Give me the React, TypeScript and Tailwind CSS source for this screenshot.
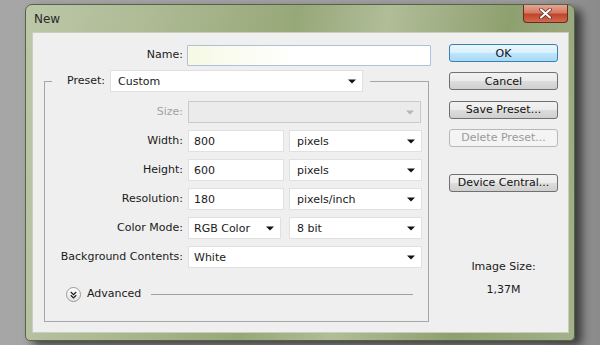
import React from 'react'

const font = { fontFamily: '"DejaVu Sans", Verdana, sans-serif' }

function Arrow({ disabled = false }: { disabled?: boolean }) {
  return (
    <svg width="8" height="5" viewBox="0 0 8 5" aria-hidden="true">
      <path d="M0 0.5h8L4 4.5z" fill={disabled ? '#b5b5b5' : '#111'} />
    </svg>
  )
}

function Select({ value, w, disabled = false, pl = 'pl-[7px]' }: { value: string; w: string; disabled?: boolean; pl?: string }) {
  return (
    <div
      className={`${w} h-[22px] flex items-center justify-between ${pl} pr-[6px] border ${
        disabled ? 'bg-[#ebebeb] border-[#c9c9c9]' : 'bg-white border-[#e0e0e0]'
      }`}
    >
      <span className="text-[11px] text-[#1a1a1a] leading-none">{value}</span>
      <Arrow disabled={disabled} />
    </div>
  )
}

function Field({ value, w }: { value: string; w: string }) {
  return (
    <div className={`${w} h-[22px] flex items-center pl-[5px] bg-white border border-[#e0e0e0]`}>
      <span className="text-[11px] text-[#1a1a1a] leading-none">{value}</span>
    </div>
  )
}

function Btn({ label, kind = 'normal' }: { label: string; kind?: 'normal' | 'default' | 'disabled' }) {
  const look =
    kind === 'default'
      ? 'border-[#3c7fb1] bg-[linear-gradient(#eaf6fd,#d9f0fc_50%,#bee6fd_50%,#a7d9f5)] text-[#111]'
      : kind === 'disabled'
        ? 'border-[#b5b9bc] bg-[#f4f4f4] text-[#9a9a9a]'
        : 'border-[#707070] bg-[linear-gradient(#f2f2f2,#ebebeb_50%,#dddddd_50%,#cfcfcf)] text-[#111]'
  return (
    <div className={`w-[109px] h-[18px] rounded-[3px] border flex items-center justify-center text-[11px] leading-none ${look}`}>
      {label}
    </div>
  )
}

function Row({ label, children, muted = false }: { label: string; children: React.ReactNode; muted?: boolean }) {
  return (
    <>
      <div className={`h-[22px] flex items-center justify-end text-[11px] ${muted ? 'text-[#a3a3a3]' : 'text-[#1a1a1a]'}`}>
        {label}
      </div>
      <div className="h-[22px] flex items-center gap-[5px]">{children}</div>
    </>
  )
}

export default function App() {
  return (
    <div
      className="w-[600px] h-[345px] overflow-hidden pl-[25px] pt-[4px] bg-[linear-gradient(90deg,#a6a6a6,#9c9c9c_90%,#8a8a8a)]"
      style={font}
    >
      <div className="w-[550px] h-[337px] flex flex-col rounded-t-[7px] rounded-b-[5px] border border-[#56634a] bg-[linear-gradient(100deg,#bcc7a8,#aebb95_20%,#97a878_45%,#b0bd98_60%,#8fa06f_80%,#a3b28a)] shadow-[7px_5px_10px_rgba(0,0,0,0.6)]">
        {/* Title bar */}
        <div className="h-[27px] shrink-0 flex items-start justify-between">
          <span className="pl-[8px] pt-[8px] text-[12px] leading-none text-[#2a2a2a]">New</span>
          <div className="mr-[6px] w-[45px] h-[18px] rounded-b-[4px] border border-t-0 border-[#6a2a1e] bg-[linear-gradient(#e6a593,#d57a62_45%,#c0452c_55%,#d06a50)] flex items-center justify-center">
            <svg width="13" height="11" viewBox="0 0 13 11" aria-hidden="true">
              <path d="M2 1.5l9 8M11 1.5l-9 8" stroke="#5a2418" strokeWidth="3.6" strokeLinecap="round" />
              <path d="M2 1.5l9 8M11 1.5l-9 8" stroke="#fff" strokeWidth="2.2" strokeLinecap="round" />
            </svg>
          </div>
        </div>

        {/* Panel */}
        <div className="ml-[6px] w-[537px] h-[301px] flex bg-[#efefef] border border-[#c8cfbd]">
          {/* Left */}
          <div className="pl-[11px] pt-[12px] w-[404px]">
            <div className="flex items-center pl-[1px] gap-[4px]">
              <div className="w-[138px] text-right text-[11px] text-[#1a1a1a]">Name:</div>
              <div className="w-[244px] h-[21px] border border-[#a9c3dc] rounded-[1px] bg-[linear-gradient(90deg,#f6f9e4,#ffffff_45%)]" />
            </div>

            <div className="mt-[15px] w-[385px] border border-[#a6a6a6] pb-[18px]">
              {/* legend */}
              <div className="-mt-[12px] ml-[7px] w-[318px] flex items-center bg-[#efefef] pl-[15px]">
                <span className="text-[11px] text-[#1a1a1a]">Preset:</span>
                <div className="ml-[5px]">
                  <Select value="Custom" w="w-[253px]" />
                </div>
              </div>

              <div className="mt-[9px] grid grid-cols-[138px_auto] gap-x-[5px] gap-y-[7.1px]">
                <Row label="Size:" muted>
                  <Select value="" w="w-[233px]" disabled />
                </Row>
                <Row label="Width:">
                  <Field value="800" w="w-[96px]" />
                  <Select value="pixels" w="w-[133px]" />
                </Row>
                <Row label="Height:">
                  <Field value="600" w="w-[96px]" />
                  <Select value="pixels" w="w-[133px]" />
                </Row>
                <Row label="Resolution:">
                  <Field value="180" w="w-[96px]" />
                  <Select value="pixels/inch" w="w-[133px]" />
                </Row>
                <Row label="Color Mode:">
                  <Select value="RGB Color" w="w-[93px]" pl="pl-[5px]" />
                  <div className="ml-[3px]">
                    <Select value="8 bit" w="w-[133px]" />
                  </div>
                </Row>
                <Row label="Background Contents:">
                  <Select value="White" w="w-[234px]" pl="pl-[5px]" />
                </Row>
              </div>

              <div className="mt-[18px] ml-[21px] mr-[15px] flex items-center">
                <div className="w-[15px] h-[15px] rounded-full border border-[#9a9a9a] bg-[linear-gradient(#ffffff,#e4e4e4)] flex items-center justify-center">
                  <svg width="7" height="8" viewBox="0 0 7 8" aria-hidden="true">
                    <path d="M0.8 1l2.7 2.6L6.2 1M0.8 4.3l2.7 2.6 2.7-2.6" fill="none" stroke="#222" strokeWidth="1.3" />
                  </svg>
                </div>
                <span className="ml-[6px] text-[11px] text-[#1a1a1a]">Advanced</span>
                <div className="ml-[10px] flex-1 h-px bg-[#a0a0a0]" />
              </div>
            </div>
          </div>

          {/* Right */}
          <div className="pl-[12px] pt-[11px] flex flex-col items-center w-[109px] box-content">
            <div className="flex flex-col gap-y-[10.3px]">
              <Btn label="OK" kind="default" />
              <Btn label="Cancel" />
              <Btn label="Save Preset..." />
              <Btn label="Delete Preset..." kind="disabled" />
            </div>
            <div className="mt-[27px]">
              <Btn label="Device Central..." />
            </div>
            <div className="mt-[68px] text-[11px] leading-[14px] text-[#1a1a1a]">Image Size:</div>
            <div className="mt-[9px] text-[11px] leading-[14px] text-[#1a1a1a]">1,37M</div>
          </div>
        </div>
      </div>
    </div>
  )
}
